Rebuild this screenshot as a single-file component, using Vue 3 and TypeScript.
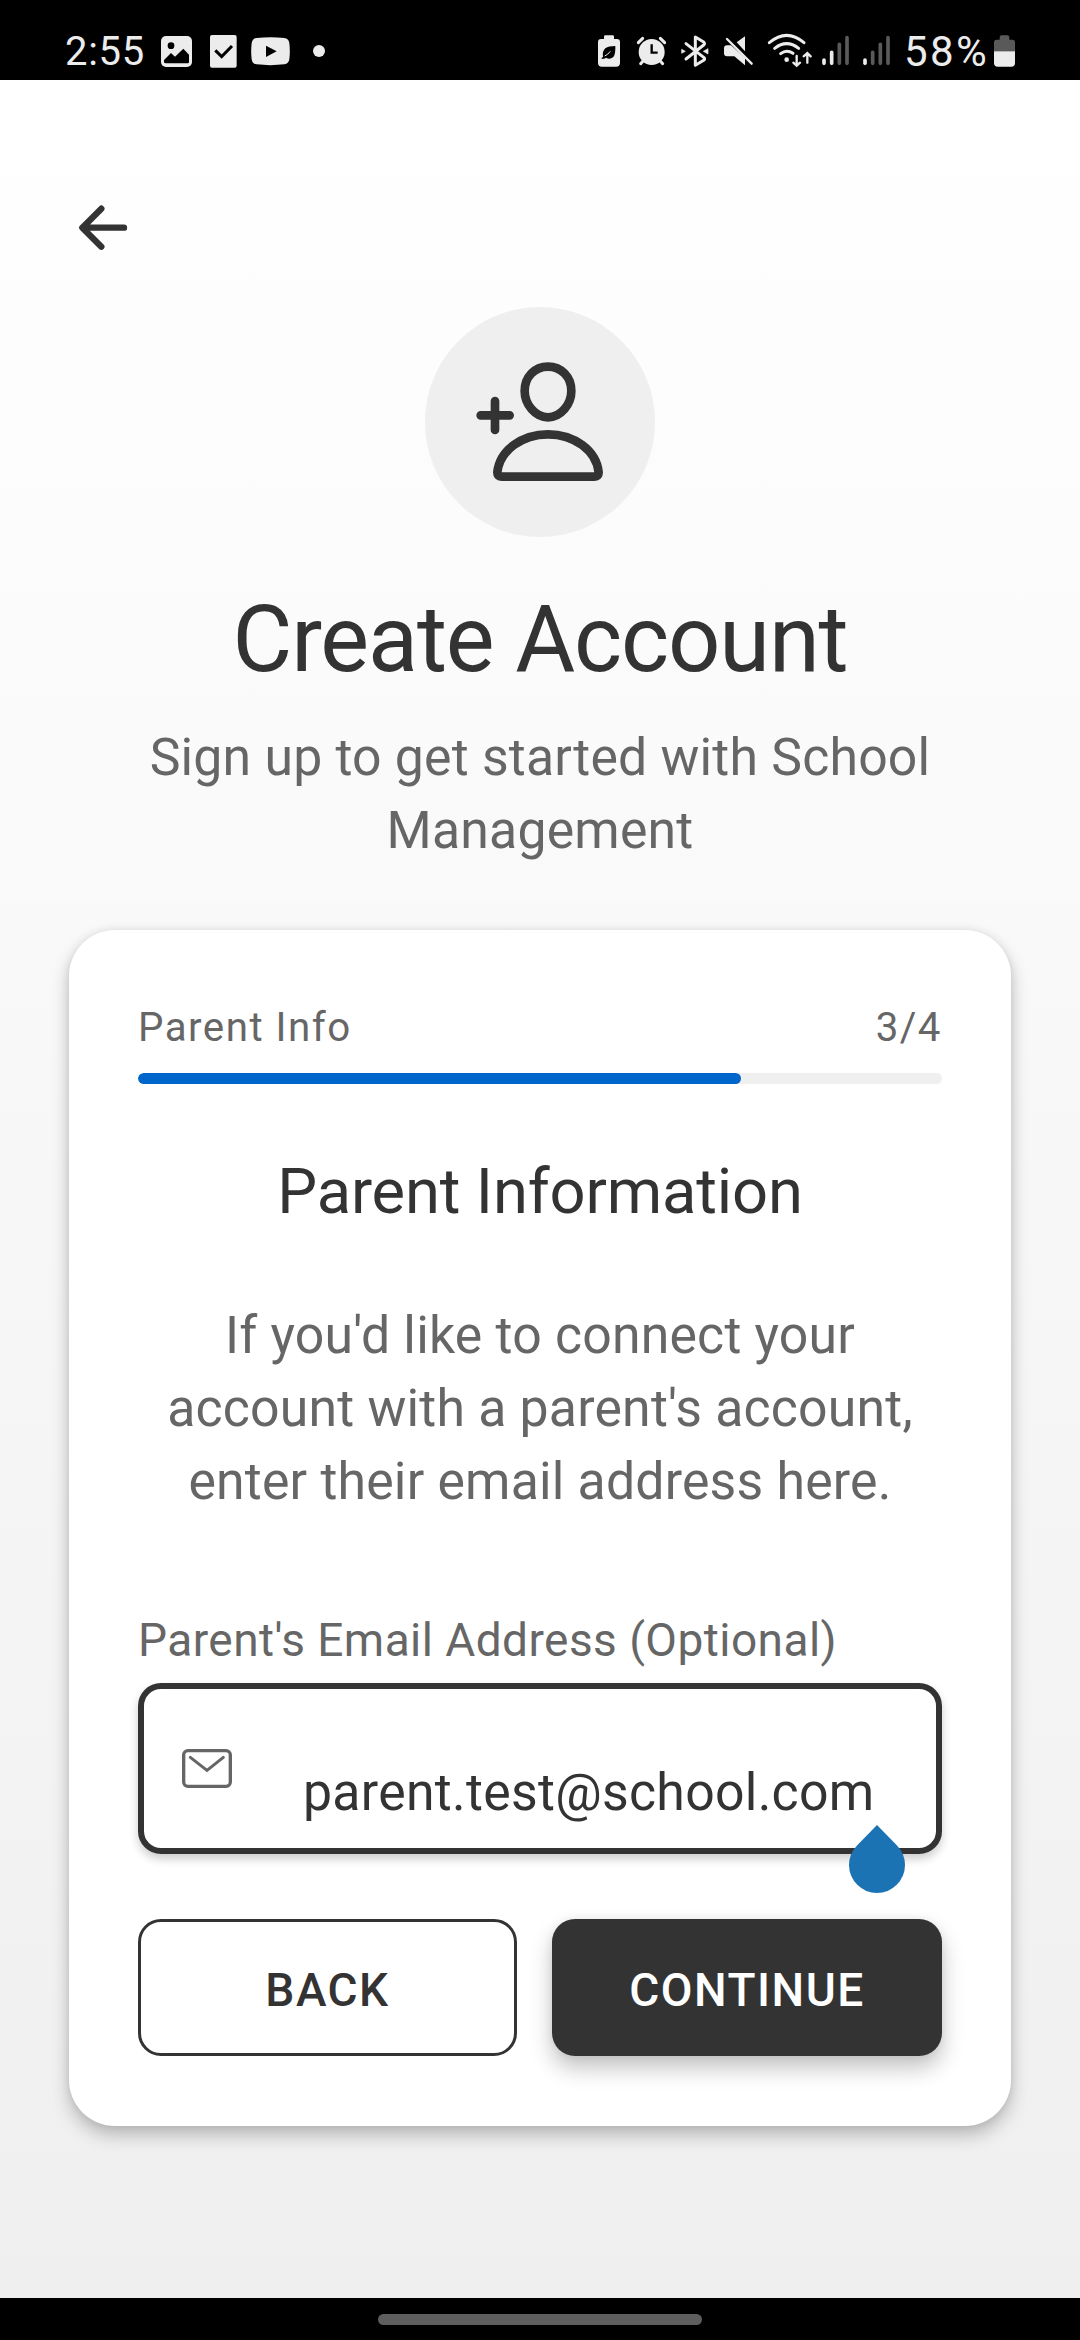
<script setup lang="ts">
import { computed, ref } from 'vue'

const step = ref(3)
const totalSteps = 4
const progress = computed(() => `${(step.value / totalSteps) * 100}%`)
const email = ref('parent.test@school.com')
</script>

<template>
  <div class="screen">
    <header class="status">
      <div class="status-left">
        <span class="time">2:55</span>
        <svg class="i-photo" viewBox="360 0 99 240">
          <rect x="363" y="108" width="93" height="93" rx="15" fill="#ececec" />
          <circle cx="393" cy="137" r="10" fill="#000" />
          <path d="M372 180L393 159L405 170L430 146L447 164V187Q447 190 443 190H377Q372 190 372 186Z" fill="#000" />
        </svg>
        <svg class="i-check" viewBox="507 0 87 240">
          <rect x="510" y="105" width="80" height="98" rx="6" fill="#ececec" />
          <path d="M526 151L545 170L576 138" fill="none" stroke="#000" stroke-width="9" />
        </svg>
        <svg class="i-video" viewBox="630 0 123 240">
          <path d="M650 114Q691 109 733 114Q746 115 748 130Q751 154 748 178Q746 192 733 193Q691 198 650 193Q637 192 635 178Q632 154 635 130Q637 115 650 114Z" fill="#ececec" />
          <path d="M678 137L710 154L678 171Z" fill="#000" />
        </svg>
        <svg class="i-dot" viewBox="816 0 42 240"><circle cx="837" cy="153" r="18" fill="#ececec" /></svg>
      </div>
      <div class="status-right">
        <svg class="i-saver" viewBox="51 0 72 240">
          <path d="M72 117V110Q72 106 76 106H98Q102 106 102 110V117H111Q120 117 120 126V188Q120 200 108 200H66Q54 200 54 188V126Q54 117 63 117Z" fill="#ececec" />
          <path d="M106 138Q107 165 99 172Q89 180 78 173Q71 178 64 176Q64 173 69 171Q66 154 76 145Q86 138 106 138Z" fill="#000" />
          <path d="M74 168Q84 164 91 154" fill="none" stroke="#ececec" stroke-width="3" />
        </svg>
        <svg class="i-alarm" viewBox="168 0 93 240">
          <g stroke="#ececec" stroke-width="9" stroke-linecap="round">
            <path d="M175 128L188 115M254 128L241 115M182 191L191 181M248 191L239 181" />
          </g>
          <circle cx="215" cy="156" r="39" fill="#ececec" />
          <path d="M215 133V158H233" fill="none" stroke="#000" stroke-width="7" />
        </svg>
        <svg class="i-bt" viewBox="303 0 87 240">
          <path d="M318 131L372 173Q376 177 371 181L346 196V111L371 126Q376 131 371 135L318 177" fill="none" stroke="#ececec" stroke-width="9" stroke-linecap="round" stroke-linejoin="round" />
          <path d="M305 148L316 154L305 160ZM384 146L370 154L384 162Z" fill="#ececec" stroke="#ececec" stroke-width="2" />
        </svg>
        <svg class="i-mute" viewBox="429 0 93 240">
          <path d="M470 127L495 109V154ZM441 136H453L495 174V196L463 169H441Q432 169 432 160V145Q432 136 441 136Z" fill="#ececec" />
          <path d="M441 117L515 191" stroke="#ececec" stroke-width="7" stroke-linecap="round" />
        </svg>
        <svg class="i-wifi" viewBox="561 0 138 240">
          <g fill="none" stroke="#ececec" stroke-width="9" stroke-linecap="round">
            <path d="M568 128Q620 84 672 128M584 145Q620 117 656 145M602 161Q620 147 639 160" />
            <path d="M650 168V197M640 188L650 197L660 188M682 188V160M671 169L682 159L692 169" stroke-width="7" />
          </g>
          <circle cx="620" cy="179" r="7" fill="#ececec" />
        </svg>
        <svg class="i-signal" viewBox="63 0 87 240">
          <g stroke-width="11" stroke-linecap="round">
            <path d="M72 180V190M95 157V190" stroke="#ececec" />
            <path d="M118 133V190M141 113V190" stroke="#5a5a5a" />
          </g>
        </svg>
        <svg class="i-signal second" viewBox="186 0 87 240">
          <g stroke-width="11" stroke-linecap="round">
            <path d="M195 180V190" stroke="#ececec" />
            <path d="M218 157V190M241 133V190M264 113V190" stroke="#5a5a5a" />
          </g>
        </svg>
        <span class="percent">58%</span>
        <svg class="i-battery" viewBox="579 0 69 240">
          <path d="M582 154V127Q582 119 590 119H599V112Q599 106 605 106H622Q628 106 628 112V119H637Q645 119 645 127V154Z" fill="#595959" />
          <path d="M582 154H645V189Q645 200 634 200H593Q582 200 582 189Z" fill="#ececec" />
        </svg>
      </div>
    </header>

    <main class="content">
      <svg class="back-arrow" viewBox="87 40 207 207">
        <path d="M184 87L127 144L184 201M129 144H252" fill="none" stroke="#333" stroke-width="19" stroke-linecap="round" stroke-linejoin="round" />
      </svg>

      <div class="avatar">
        <svg viewBox="45 50 690 690">
          <g fill="none" stroke="#333" stroke-width="26" stroke-linecap="round" stroke-linejoin="round">
            <path d="M414 229C454 229 484 260 484 302C484 342 452 381 414 381C376 381 344 342 344 302C344 260 374 229 414 229Z" />
            <path d="M414 432C492 432 559 480 566 546Q566 559 554 559H274Q262 559 262 546C269 480 336 432 414 432Z" />
            <path d="M212 375H299M255 332V419" />
          </g>
        </svg>
      </div>

      <h1>Create Account</h1>
      <p class="subtitle">Sign up to get started with School<br />Management</p>

      <section class="card">
        <div class="step-row">
          <span>Parent Info</span>
          <span>{{ step }}/{{ totalSteps }}</span>
        </div>
        <div class="track"><div class="fill" :style="{ width: progress }"></div></div>

        <h2>Parent Information</h2>
        <p class="hint">If you'd like to connect your<br />account with a parent's account,<br />enter their email address here.</p>

        <div class="label">Parent's Email Address (Optional)</div>
        <div class="field">
          <svg class="mail" viewBox="392 444 156 122">
            <rect x="400" y="452" width="140" height="107" rx="13" fill="none" stroke="#666" stroke-width="10" />
            <path d="M420 472L470 511L519 472" fill="none" stroke="#666" stroke-width="9" stroke-linecap="round" stroke-linejoin="miter" />
          </svg>
          <span class="value">{{ email }}</span>
          <svg class="handle" viewBox="0 0 56 68">
            <path d="M28 0L48 20.4A28 28 0 1 1 8 20.4Z" fill="#1c73b4" />
          </svg>
        </div>

        <div class="actions">
          <button class="btn outline" type="button">BACK</button>
          <button class="btn solid" type="button">CONTINUE</button>
        </div>
      </section>
    </main>

    <footer class="nav"><div class="pill"></div></footer>
  </div>
</template>

<style>
html,
body {
  margin: 0;
  background: #000;
}
</style>

<style scoped>
.screen {
  width: 1080px;
  height: 2340px;
  display: flex;
  flex-direction: column;
  overflow: hidden;
  font-family: Roboto, 'Liberation Sans', sans-serif;
  color: #333;
}

.screen * {
  box-sizing: border-box;
}

svg {
  display: block;
  flex: none;
}

.status {
  height: 80px;
  flex: none;
  background: #000;
  color: #ececec;
  display: flex;
  justify-content: space-between;
  padding: 0 64px;
}

.status-left,
.status-right {
  display: flex;
}

.status svg {
  height: 80px;
}

.time,
.percent {
  font-size: 40px;
  line-height: 47px;
  padding-top: 28px;
  letter-spacing: 0.7px;
  white-space: nowrap;
}

.time {
  width: 96px;
  padding-left: 1px;
}

.percent {
  width: 102px;
  padding-left: 13px;
  font-size: 42px;
  letter-spacing: 2.4px;
}

.i-photo { width: 33px; }
.i-check { width: 29px; margin-left: 16px; }
.i-video { width: 41px; margin-left: 12px; }
.i-dot { width: 14px; margin-left: 21px; }
.i-saver { width: 24px; }
.i-alarm { width: 31px; margin-left: 15px; }
.i-bt { width: 29px; margin-left: 14px; }
.i-mute { width: 31px; margin-left: 13px; }
.i-wifi { width: 46px; margin-left: 13px; }
.i-signal { width: 29px; margin-left: 8px; }
.i-signal.second { margin-left: 12px; }
.i-battery { width: 23px; }

.content {
  flex: 1;
  min-height: 0;
  padding: 113px 69px 0;
  background: linear-gradient(#fff, #efefef);
  display: flex;
  flex-direction: column;
}

.back-arrow {
  width: 69px;
  height: 69px;
}

.avatar {
  width: 230px;
  height: 230px;
  flex: none;
  align-self: center;
  margin-top: 45px;
  border-radius: 50%;
  background: #efefef;
}

h1,
h2,
p {
  margin: 0;
  font-weight: 400;
  text-align: center;
}

h1 {
  margin-top: 45px;
  font-size: 92px;
  line-height: 115px;
  letter-spacing: -1.15px;
}

.subtitle,
.hint {
  font-size: 51.75px;
  letter-spacing: 0.2px;
  color: #666;
  white-space: nowrap;
}

.subtitle {
  margin-top: 24px;
  line-height: 73px;
}

.card {
  height: 1196px;
  flex: none;
  margin-top: 63px;
  padding: 69px 69px 0;
  border-radius: 46px;
  background: #fff;
  box-shadow: 0 9px 18px rgba(0, 0, 0, 0.24), 0 0 8px rgba(0, 0, 0, 0.08);
  display: flex;
  flex-direction: column;
}

.step-row {
  display: flex;
  justify-content: space-between;
  font-size: 40.25px;
  line-height: 57px;
  letter-spacing: 1.5px;
  color: #666;
}

.track {
  height: 11px;
  margin-top: 17px;
  border-radius: 6px;
  background: #efefef;
  overflow: hidden;
}

.fill {
  height: 100%;
  border-radius: 6px;
  background: #0066cc;
}

h2 {
  margin-top: 67px;
  font-size: 63.25px;
  line-height: 80px;
  letter-spacing: -0.15px;
}

.hint {
  margin-top: 68px;
  line-height: 73px;
}

.label {
  margin-top: 94px;
  font-size: 46px;
  line-height: 57px;
  letter-spacing: 0.45px;
  color: #666;
  white-space: nowrap;
}

.field {
  position: relative;
  height: 171px;
  margin-top: 14px;
  border: 6px solid #333;
  border-radius: 23px;
  background: #fff;
  box-shadow: 0 5px 10px rgba(0, 0, 0, 0.2);
  display: flex;
}

.mail {
  width: 52px;
  height: 40.7px;
  margin: 59px 0 0 37px;
}

.value {
  margin: 73px 0 0 70px;
  font-size: 51.75px;
  line-height: 61px;
  letter-spacing: 0.3px;
  white-space: nowrap;
}

/* Text selection handle hangs below the caret, over the field border */
.handle {
  position: absolute;
  left: 705px;
  top: 136px;
  width: 56px;
  height: 68px;
}

.actions {
  margin-top: 65px;
  display: flex;
  gap: 35px;
}

.btn {
  height: 137px;
  padding: 5px 0 0;
  border: 0;
  border-radius: 23px;
  font: 500 46px/54px Roboto, 'Liberation Sans', sans-serif;
  letter-spacing: 1.5px;
}

.outline {
  width: 379px;
  border: 3px solid #333;
  background: #fff;
  color: #333;
}

.solid {
  flex: 1;
  background: #333;
  color: #fff;
  box-shadow: 0 12px 22px rgba(0, 0, 0, 0.24), 0 0 8px rgba(0, 0, 0, 0.06);
}

.nav {
  height: 42px;
  flex: none;
  background: #000;
  padding-top: 16px;
}

.pill {
  width: 324px;
  height: 11px;
  margin: 0 auto;
  border-radius: 6px;
  background: #5e5e5e;
}
</style>
